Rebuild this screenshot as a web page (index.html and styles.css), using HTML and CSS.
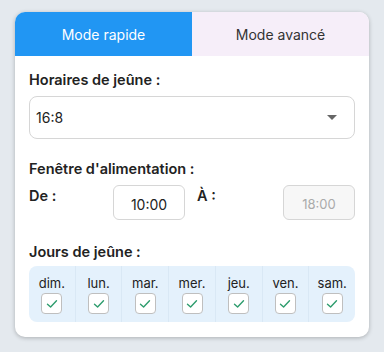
FILE: index.html
```html
<!DOCTYPE html>
<html>
<head>
    <title>Jeûne</title>
    <link rel="stylesheet" href="styles.css">
</head>
<body>
    <div class="card">
        <div class="tabs">
            <div class="tab active">Mode rapide</div>
            <div class="tab">Mode avancé</div>
        </div>
        <div class="content">
            <div class="label">Horaires de jeûne :</div>
            <div class="select">
                <span>16:8</span>
                <span class="arrow"></span>
            </div>

            <div class="label label-window">Fenêtre d'alimentation :</div>
            <div class="window">
                <span class="sub">De :</span>
                <div class="time">10:00</div>
                <span class="sub">À :</span>
                <div class="time disabled">18:00</div>
            </div>

            <div class="label label-days">Jours de jeûne :</div>
            <div class="days">
                <div class="day"><span>dim.</span><span class="check"></span></div>
                <div class="day"><span>lun.</span><span class="check"></span></div>
                <div class="day"><span>mar.</span><span class="check"></span></div>
                <div class="day"><span>mer.</span><span class="check"></span></div>
                <div class="day"><span>jeu.</span><span class="check"></span></div>
                <div class="day"><span>ven.</span><span class="check"></span></div>
                <div class="day"><span>sam.</span><span class="check"></span></div>
            </div>
        </div>
    </div>
    <script>
        const tick = '<svg width="12" height="10" viewBox="0 0 12 10"><path d="M1.5 5.2 L4.6 8 L10.5 1.8" fill="none" stroke="#2e9d6e" stroke-width="1.4" stroke-linecap="round" stroke-linejoin="round"/></svg>';
        document.querySelectorAll('.check').forEach(box => {
            box.innerHTML = tick;
        });
    </script>
</body>
</html>
```

FILE: styles.css
```css
body {
    margin: 0;
    width: 384px;
    height: 352px;
    background: #e4e9ee;
    font-family: Inter, "Noto Sans", sans-serif;
    color: #222;
    padding: 12px 0 0 15px;
    box-sizing: border-box;
}

.card {
    width: 354px;
    height: 325px;
    background: #fff;
    border-radius: 10px;
    overflow: hidden;
    box-shadow: 0 1px 4px rgba(0, 0, 0, 0.25);
}

.tabs {
    display: flex;
    height: 44px;
}

.tab {
    flex: 1;
    display: flex;
    align-items: center;
    justify-content: center;
    font-size: 14px;
    background: #f6eef9;
    color: #333;
}

.tab.active {
    background: #2196f3;
    color: #fff;
}

.content {
    padding: 15px 14px 0 14px;
}

.label {
    font-size: 14.5px;
    font-weight: 600;
    height: 18px;
    line-height: 18px;
}

.select {
    margin-top: 7px;
    height: 43px;
    border: 1px solid #d6d6d6;
    border-radius: 8px;
    box-sizing: border-box;
    display: flex;
    align-items: center;
    justify-content: space-between;
    padding: 0 17px 0 6px;
    font-size: 14px;
}

.arrow {
    width: 0;
    height: 0;
    border-left: 5px solid transparent;
    border-right: 5px solid transparent;
    border-top: 5px solid #666;
}

.label-window {
    margin-top: 21px;
}

.window {
    display: grid;
    grid-template-columns: 84px 72px 98px 72px;
    margin-top: 7px;
    height: 35px;
}

.sub {
    font-size: 14.5px;
    font-weight: 600;
    padding-top: 2px;
}

.sub:nth-of-type(2) {
    padding-left: 12px;
}

.time {
    border: 1px solid #d6d6d6;
    border-radius: 6px;
    box-sizing: border-box;
    display: flex;
    align-items: center;
    justify-content: center;
    font-size: 14px;
    padding-top: 3px;
}

.time.disabled {
    background: #f7f7f7;
    color: #aaa;
    font-size: 13px;
}

.label-days {
    margin-top: 23px;
}

.days {
    margin-top: 5px;
    height: 56px;
    background: #e4f1fc;
    border-radius: 8px;
    display: flex;
}

.day {
    flex: 1;
    display: flex;
    flex-direction: column;
    align-items: center;
    padding-top: 9px;
    font-size: 13px;
    border-left: 1px solid #d9e8f5;
}

.day:first-child {
    border-left: none;
}

.check {
    margin-top: 2px;
    width: 21px;
    height: 21px;
    box-sizing: border-box;
    border: 1px solid #bfbfbf;
    border-radius: 4px;
    background: #fff;
    display: flex;
    align-items: center;
    justify-content: center;
}
```
